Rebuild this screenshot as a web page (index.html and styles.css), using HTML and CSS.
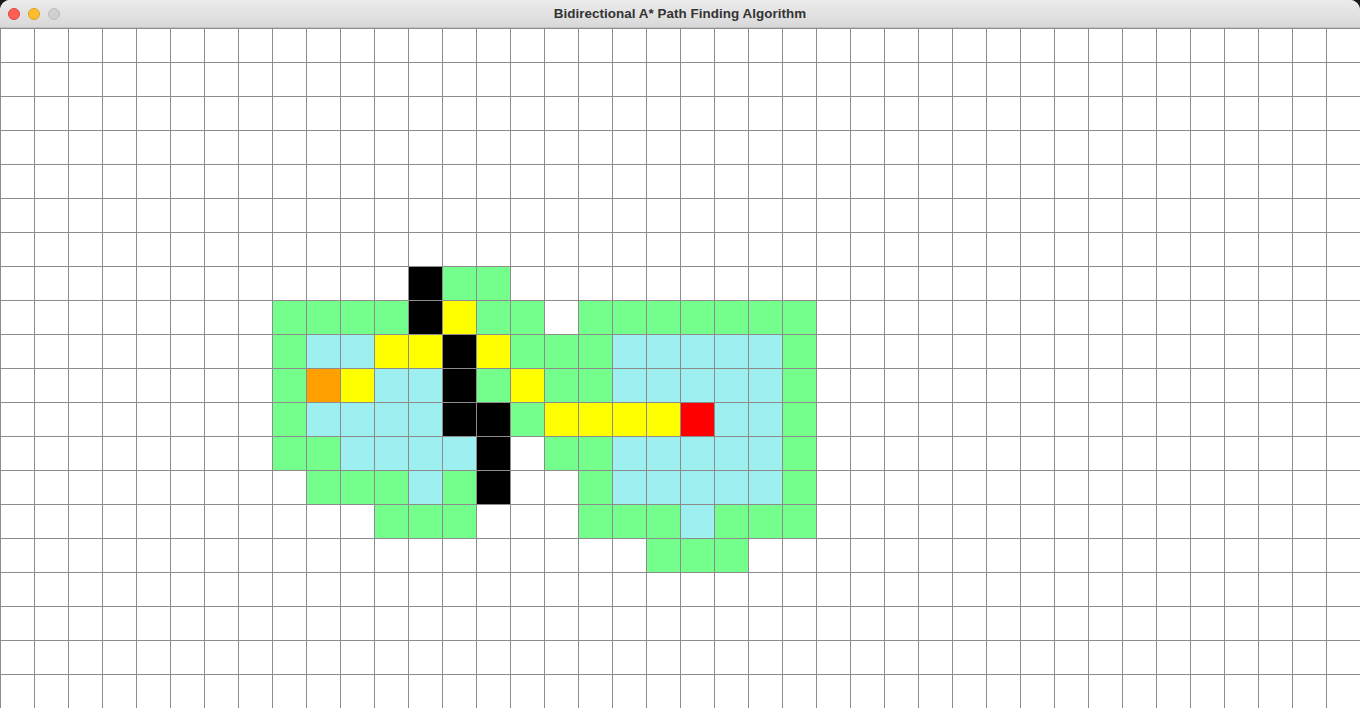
FILE: index.html
```html
<!DOCTYPE html>
<html>
<head>
<meta charset="utf-8">
<title>Bidirectional A* Path Finding Algorithm</title>
<link rel="stylesheet" href="styles.css">
</head>
<body>
<div class="window">
  <div class="titlebar">
    <div class="lights">
      <span class="light red"></span>
      <span class="light yellow"></span>
      <span class="light gray"></span>
    </div>
    <div class="title">Bidirectional A* Path Finding Algorithm</div>
  </div>
  <div class="grid" id="grid"></div>
</div>
<script src="grid.js"></script>
</body>
</html>
```
FILE: styles.css
```css
* { box-sizing: border-box; }
html, body {
  margin: 0;
  padding: 0;
  background: #1a1a1a;
  width: 1360px;
  height: 708px;
  overflow: hidden;
}
.window {
  width: 1360px;
  height: 708px;
  background: #ffffff;
  border-radius: 10px 10px 0 0;
  overflow: hidden;
  display: flex;
  flex-direction: column;
}
.titlebar {
  height: 28px;
  flex: none;
  background: linear-gradient(#ebebeb, #d9d9d9);
  border-bottom: 1px solid #c2c2c2;
  position: relative;
  display: flex;
  align-items: center;
  justify-content: center;
}
.lights {
  position: absolute;
  left: 8px;
  top: 8px;
  display: flex;
  gap: 8px;
}
.light {
  width: 12px;
  height: 12px;
  border-radius: 50%;
  display: block;
}
.light.red { background: #fe5f57; border: 0.5px solid #e0443e; }
.light.yellow { background: #febc2e; border: 0.5px solid #dea123; }
.light.gray { background: #d0d0d0; border: 0.5px solid #bcbcbc; }
.title {
  font-family: "Liberation Sans", Arial, sans-serif;
  font-weight: bold;
  font-size: 13.4px;
  color: #333333;
  letter-spacing: 0.05px;
}
.grid {
  display: grid;
  grid-template-columns: repeat(40, 34px);
  grid-template-rows: repeat(20, 34px);
  flex: none;
}
.cell {
  border-left: 1px solid #8c8c8c;
  border-top: 1px solid #8c8c8c;
  background: #ffffff;
}
.cell.g { background: #74fe8c; }
.cell.t { background: #9eefef; }
.cell.y { background: #ffff00; }
.cell.k { background: #000000; }
.cell.o { background: #ff9f00; }
.cell.r { background: #ff0000; }
```
FILE: grid.js
```js
(function () {
  var marks = [
    [7, 12, "kgg"],
    [8, 8, "ggggkygg.ggggggg"],
    [9, 8, "gttyykygggtttttg"],
    [10, 8, "goyttkgyggtttttg"],
    [11, 8, "gttttkkgyyyyrttg"],
    [12, 8, "ggttttk.ggtttttg"],
    [13, 8, ".gggtgk..gtttttg"],
    [14, 11, "ggg...gggtggg"],
    [15, 19, "ggg"]
  ];
  var map = {};
  marks.forEach(function (m) {
    for (var i = 0; i < m[2].length; i++) {
      var ch = m[2][i];
      if (ch !== ".") map[m[0] + "," + (m[1] + i)] = ch;
    }
  });
  var grid = document.getElementById("grid");
  var frag = document.createDocumentFragment();
  for (var r = 0; r < 20; r++) {
    for (var c = 0; c < 40; c++) {
      var d = document.createElement("div");
      var k = map[r + "," + c];
      d.className = "cell" + (k ? " " + k : "");
      frag.appendChild(d);
    }
  }
  grid.appendChild(frag);
})();
```
